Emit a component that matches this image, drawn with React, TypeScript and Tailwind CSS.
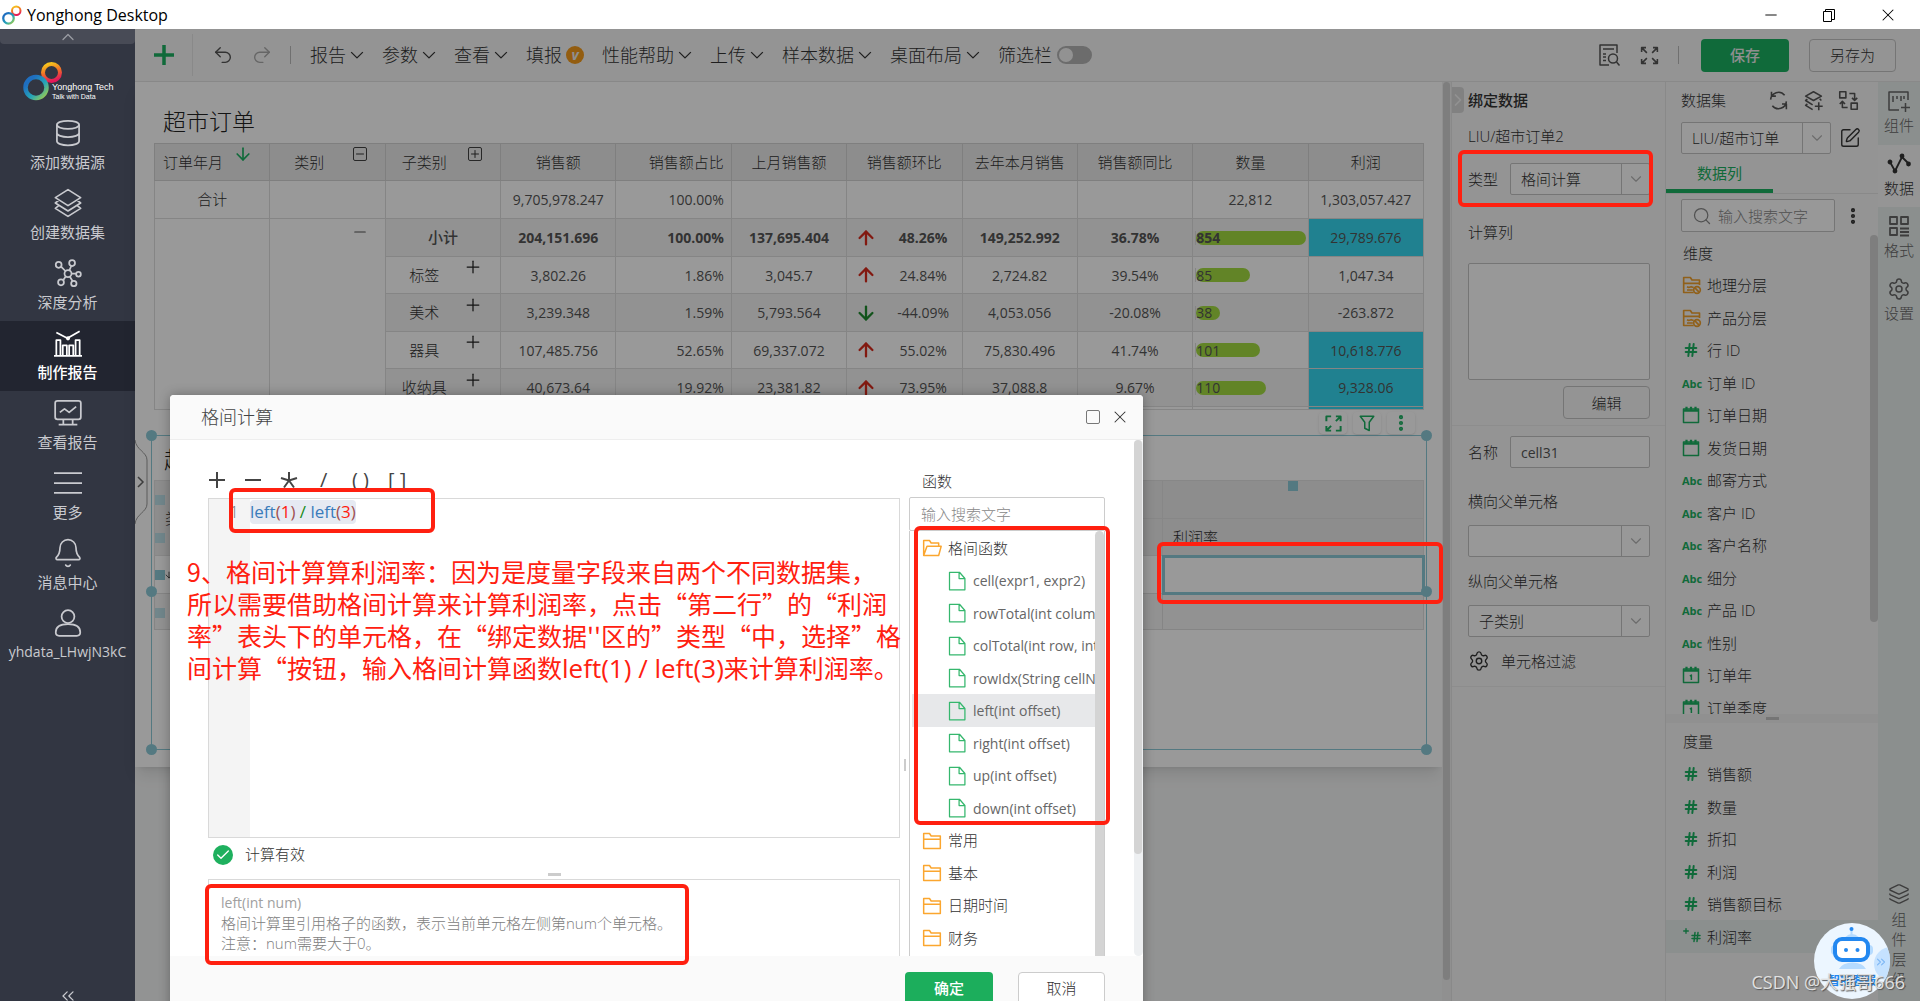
import type { ReactNode } from 'react';
import {
  ArrowDown,
  ArrowUp,
  Bell,
  Check,
  ChevronDown,
  ChevronRight,
  ChevronUp,
  ChevronsLeft,
  ChevronsRight,
  EllipsisVertical,
  Hash,
  Layers,
  Minus,
  Plus,
  Redo2,
  Search,
  Settings,
  SquarePen,
  Undo2,
  X,
} from 'lucide-react';

function RingLogo({ className, id }: { className: string; id: string }) {
  return (
    <svg className={className} viewBox="0 0 40 40" fill="none" aria-hidden="true">
      <defs>
        <linearGradient id={`${id}-blue`} x1="0" y1="0" x2="1" y2="1">
          <stop offset="0.2" stopColor="#1f6fc0" />
          <stop offset="0.6" stopColor="#25a5b8" />
          <stop offset="1" stopColor="#a8cf45" />
        </linearGradient>
        <linearGradient id={`${id}-red`} x1="0.3" y1="0" x2="0.6" y2="1">
          <stop offset="0" stopColor="#f6c21c" />
          <stop offset="0.5" stopColor="#f06a2a" />
          <stop offset="1" stopColor="#e3175b" />
        </linearGradient>
      </defs>
      <circle cx="28.5" cy="11.5" r="8.5" stroke={`url(#${id}-red)`} strokeWidth="4" />
      <circle cx="13" cy="26.5" r="10.5" stroke={`url(#${id}-blue)`} strokeWidth="4.5" />
    </svg>
  );
}

interface LineIconProps {
  className?: string;
  strokeWidth?: number;
  children: ReactNode;
}

function LineIcon({ className = 'size-6', strokeWidth = 1.5, children }: LineIconProps) {
  return (
    <svg
      className={className}
      viewBox="0 0 24 24"
      fill="none"
      stroke="currentColor"
      strokeWidth={strokeWidth}
      strokeLinejoin="round"
      aria-hidden="true"
    >
      {children}
    </svg>
  );
}

function ExpandIcon({ className }: { className: string }) {
  return (
    <LineIcon className={className} strokeWidth={1.8}>
      <path d="M3 8V3h5M3 3l6 6M16 3h5v5M21 3l-6 6M3 16v5h5M3 21l6-6M21 16v5h-5M21 21l-6-6" />
    </LineIcon>
  );
}

function FrameIcon({ className }: { className: string }) {
  return (
    <LineIcon className={className} strokeWidth={2.5}>
      <path d="M3 9V3h6M15 3h6v6M21 3l-6 6M3 15v6h6M3 21l6-6M21 15v6h-6" />
    </LineIcon>
  );
}

const navItems = [
  {
    label: '添加数据源',
    icon: (
      <LineIcon className="size-7">
        <ellipse cx="12" cy="5" rx="9.500" ry="3.500" />
        <path d="M2.500 5v14c0 2 4.200 3.500 9.500 3.500s9.500-1.500 9.500-3.500V5M2.500 12c0 2 4.200 3.500 9.500 3.500s9.500-1.500 9.500-3.500" />
      </LineIcon>
    ),
  },
  {
    label: '创建数据集',
    icon: (
      <LineIcon className="size-8" strokeWidth={1.25}>
        <path d="M12 2l9.500 6-9.500 6-9.500-6zM5 10l-2.500 2 9.500 6 9.500-6-2.500-2M5 14l-2.500 2 9.500 6 9.500-6-2.500-2" />
      </LineIcon>
    ),
  },
  {
    label: '深度分析',
    icon: (
      <LineIcon className="size-7">
        <circle cx="12" cy="12.500" r="3" />
        <circle cx="4" cy="5" r="2.500" />
        <circle cx="15.500" cy="3.500" r="2.500" />
        <circle cx="21" cy="13" r="2" />
        <circle cx="6" cy="20" r="2.500" />
        <circle cx="17" cy="21" r="2.300" />
        <path d="M6 6.500l4 4M14.800 6l-1.600 3.800M15 12.500h4M8 18l2-3M16 19l-2.500-4" />
      </LineIcon>
    ),
  },
  {
    label: '制作报告',
    active: true,
    icon: (
      <LineIcon className="size-7">
        <path d="M0 23h24M2 23V9.500h3.500V23M7.500 23V14H11v9M13 23v-9h3.500v9M18.500 23V9.500H22V23M2 3l9.500 5L22 2" />
        <circle cx="12" cy="8" r="1" />
      </LineIcon>
    ),
  },
  {
    label: '查看报告',
    icon: (
      <LineIcon className="size-7">
        <rect x="1" y="1.500" width="22" height="16" rx="2" />
        <path d="M5 11.500l4-3 4 3 6-5M8 18v3.500M16 18v3.500M4 22h16" />
      </LineIcon>
    ),
  },
  {
    label: '更多',
    icon: (
      <LineIcon className="size-7">
        <path d="M0 3.500h24M0 12h24M0 20.500h24" />
      </LineIcon>
    ),
  },
  { label: '消息中心', icon: <Bell className="size-8" strokeWidth={1.25} /> },
  {
    label: 'yhdata_LHwjN3kC',
    icon: (
      <LineIcon className="size-7">
        <circle cx="12" cy="6.500" r="5.500" />
        <path d="M1.500 20c0-4.500 4-7 10.500-7s10.500 2.500 10.500 7c0 2-1 3-3 3h-15c-2 0-3-1-3-3z" />
      </LineIcon>
    ),
  },
];

function Sidebar() {
  return (
    <nav className="flex w-[135px] shrink-0 flex-col bg-[#323642] text-[#c9cacf]">
      <button type="button" aria-label="收起" className="flex h-[15px] items-center justify-center rounded-b-sm bg-[#484b56]">
        <ChevronUp className="size-5 text-[#9a9ca3]" strokeWidth={1.5} />
      </button>
      <div className="flex h-[67px] items-end pb-[10px] pl-[23px]">
        <RingLogo className="size-10 shrink-0" id="brand" />
        <div className="-ml-[11px] font-['Liberation_Sans',sans-serif] whitespace-nowrap text-white">
          <div className="text-[9px] leading-[11px]">Yonghong Tech</div>
          <div className="text-[7px] leading-2">Talk with Data</div>
        </div>
      </div>
      {navItems.map((item) => (
        <a
          key={item.label}
          href="#"
          className={
            item.active
              ? 'flex h-[70px] flex-col items-center bg-[#222530] pt-1 text-white'
              : 'flex h-[70px] flex-col items-center pt-1'
          }
        >
          <span className="flex h-9 items-center">{item.icon}</span>
          <span
            className={
              item.active
                ? 'text-[15px] leading-[22px] font-medium'
                : item.label.startsWith('yhdata')
                  ? 'text-[14px] leading-[22px]'
                  : 'text-[15px] leading-[22px]'
            }
          >
            {item.label}
          </span>
        </a>
      ))}
      <button type="button" aria-label="折叠菜单" className="mt-auto flex h-2.5 items-center justify-center">
        <ChevronsLeft className="size-5" strokeWidth={1.5} />
      </button>
    </nav>
  );
}

const menus = ['报告', '参数', '查看', '填报', '性能帮助', '上传', '样本数据', '桌面布局'];

function Toolbar() {
  return (
    <header className="flex h-[53px] shrink-0 items-center border-b border-[#e4e4e4] bg-[#f7f7f7] text-[18px] font-light text-[#333]">
      <button type="button" aria-label="新建" className="flex h-[42px] w-[58px] items-center justify-center border-r border-[#e4e4e4]">
        <LineIcon className="size-6 text-[#1cb162]" strokeWidth={3.5}>
          <path d="M12 2v20M2 12h20" />
        </LineIcon>
      </button>
      <button type="button" aria-label="撤销" className="ml-[19px] text-[#555]">
        <Undo2 className="size-[22px]" strokeWidth={1.5} />
      </button>
      <button type="button" aria-label="重做" className="ml-[17px] text-[#aaa]">
        <Redo2 className="size-[22px]" strokeWidth={1.5} />
      </button>
      <span className="mr-[19px] ml-[17px] h-[18px] w-px bg-[#bbb]" />
      <div className="flex items-center gap-[18px]">
        {menus.map((menu) => (
          <button key={menu} type="button" className="flex items-center gap-1 whitespace-nowrap">
            {menu}
            {menu === '填报' ? (
              <span className="flex size-[18px] items-center justify-center rounded-full bg-[#f59b1c] text-[14px] leading-none font-bold text-[#eee] italic">
                v
              </span>
            ) : (
              <LineIcon className="size-[14px]" strokeWidth={2.2}>
                <path d="M2 7l10 10L22 7" />
              </LineIcon>
            )}
          </button>
        ))}
        <label className="flex items-center gap-[5px] whitespace-nowrap">
          筛选栏
          <input
            type="checkbox"
            role="switch"
            className="h-[18px] w-[35px] appearance-none rounded-full border-2 border-[#b4b4b4] bg-[#b4b4b4] before:block before:size-[14px] before:rounded-full before:bg-[#f4f4f4]"
          />
        </label>
      </div>
      <div className="ml-auto flex items-center pr-6">
        <button type="button" aria-label="预览" className="text-[#555]">
          <LineIcon className="size-6">
            <path d="M12 22H3V2h17v8M6 6h11M6 11h3M6 14h3M6 17.500h3" />
            <circle cx="16" cy="15.500" r="4.500" />
            <path d="M19.500 19l3 3.500" />
          </LineIcon>
        </button>
        <button type="button" aria-label="全屏" className="ml-[18px] text-[#555]">
          <ExpandIcon className="size-[21px]" />
        </button>
        <span className="mr-[22px] ml-[18px] h-[18px] w-px bg-[#bbb]" />
        <button type="button" className="h-[33px] w-[88px] rounded-sm bg-[#1cb162] text-[15px] font-medium text-[#eee]">
          保存
        </button>
        <button type="button" className="ml-5 h-[33px] w-[87px] rounded-sm border border-[#c4c4c4] text-[15px]">
          另存为
        </button>
      </div>
    </header>
  );
}

interface SalesRow {
  name: string;
  bold?: boolean;
  sales: string;
  share: string;
  lastMonth: string;
  chain: string;
  down?: boolean;
  lastYear: string;
  yoy: string;
  count: string;
  bar: string;
  profit: string;
  highlight?: boolean;
}

const salesRows: SalesRow[] = [
  { name: '小计', bold: true, sales: '204,151.696', share: '100.00%', lastMonth: '137,695.404', chain: '48.26%', lastYear: '149,252.992', yoy: '36.78%', count: '854', bar: 'w-[110px]', profit: '29,789.676', highlight: true },
  { name: '标签', sales: '3,802.26', share: '1.86%', lastMonth: '3,045.7', chain: '24.84%', lastYear: '2,724.82', yoy: '39.54%', count: '85', bar: 'w-[54px]', profit: '1,047.34' },
  { name: '美术', sales: '3,239.348', share: '1.59%', lastMonth: '5,793.564', chain: '-44.09%', down: true, lastYear: '4,053.056', yoy: '-20.08%', count: '38', bar: 'w-6', profit: '-263.872' },
  { name: '器具', sales: '107,485.756', share: '52.65%', lastMonth: '69,337.072', chain: '55.02%', lastYear: '75,830.496', yoy: '41.74%', count: '101', bar: 'w-16', profit: '10,618.776', highlight: true },
  { name: '收纳具', sales: '40,673.64', share: '19.92%', lastMonth: '23,381.82', chain: '73.95%', lastYear: '37,088.8', yoy: '9.67%', count: '110', bar: 'w-[70px]', profit: '9,328.06', highlight: true },
];

function SquareToggle({ plus = false }: { plus?: boolean }) {
  return (
    <span className="flex size-[14px] -translate-y-2 items-center justify-center rounded-xs border border-[#444]">
      {plus ? <Plus className="size-3" /> : <Minus className="size-3" />}
    </span>
  );
}

function SalesTable() {
  return (
    <table className="w-full table-fixed border-collapse text-center text-[14px] text-[#555] [&_td]:border [&_td]:border-[#dedede] [&_td]:p-0 [&_th]:border [&_th]:border-[#d4d4d4] [&_th]:p-0 [&_th]:text-[15px] [&_th]:font-light [&_th]:text-[#333]">
      <thead>
        <tr className="h-[37px] bg-[#ececec] whitespace-nowrap">
          <th>
            <div className="flex items-center justify-between pr-5 pl-2">
              订单年月
              <ArrowDown className="-mt-4 -mr-1 size-5 text-[#1cb162]" />
            </div>
          </th>
          <th>
            <div className="flex items-center justify-between pr-[18px] pl-6">
              类别
              <SquareToggle />
            </div>
          </th>
          <th>
            <div className="flex items-center justify-between pr-[18px] pl-4">
              子类别
              <SquareToggle plus />
            </div>
          </th>
          <th>销售额</th>
          <th>
            <div className="pr-[7px] text-right">销售额占比</div>
          </th>
          <th>上月销售额</th>
          <th>销售额环比</th>
          <th>去年本月销售</th>
          <th>销售额同比</th>
          <th>数量</th>
          <th>利润</th>
        </tr>
      </thead>
      <tbody>
        <tr className="h-[38px]">
          <td className="text-[15px] font-light text-[#333]">合计</td>
          <td />
          <td />
          <td>9,705,978.247</td>
          <td>
            <div className="pr-[7px] text-right">100.00%</div>
          </td>
          <td />
          <td />
          <td />
          <td />
          <td>22,812</td>
          <td>1,303,057.427</td>
        </tr>
        {salesRows.map((row, index) => (
          <tr
            key={row.name}
            className={
              (index % 2 === 0 ? 'h-[38px] bg-[#f3f3f3]' : 'h-[37px]') + (row.bold ? ' font-bold' : '')
            }
          >
            {index === 0 && (
              <>
                <td rowSpan={6} className="bg-white" />
                <td rowSpan={6} className="bg-white align-top">
                  <Minus className="mt-1 mr-[16px] ml-auto size-[18px]" strokeWidth={1.5} />
                </td>
              </>
            )}
            <td className={row.bold ? 'text-[15px] font-medium' : 'text-[15px] font-light text-[#333]'}>
              {row.bold ? (
                row.name
              ) : (
                <div className="flex items-center">
                  <span className="w-[77px]">{row.name}</span>
                  <Plus className="size-5 -translate-y-2 text-[#222]" strokeWidth={1.5} />
                </div>
              )}
            </td>
            <td>{row.sales}</td>
            <td>
              <div className="pr-[7px] text-right">{row.share}</div>
            </td>
            <td>{row.lastMonth}</td>
            <td>
              <div className="flex items-center pl-2">
                {row.down ? (
                  <ArrowDown className="size-[22px] text-[#1f8a2d]" strokeWidth={2.5} />
                ) : (
                  <ArrowUp className="size-[22px] text-[#d92a1c]" strokeWidth={2.5} />
                )}
                <span className="ml-[15px] w-[62px] text-center">{row.chain}</span>
              </div>
            </td>
            <td>{row.lastYear}</td>
            <td>{row.yoy}</td>
            <td>
              <div className="ml-[2px] flex h-full items-center border-l border-[#dedede]">
                <div className={`${row.bar} flex h-[14px] items-center rounded-full bg-[#a3dd42]`}>{row.count}</div>
              </div>
            </td>
            <td className={row.highlight ? 'bg-[#36d8f0] font-normal' : ''}>{row.profit}</td>
          </tr>
        ))}
        <tr className="h-[3px]">
          <td />
          <td />
          <td />
          <td />
          <td />
          <td />
          <td />
          <td />
          <td className="bg-[#36d8f0]" />
        </tr>
      </tbody>
    </table>
  );
}

const handles = [
  '-top-1.5 -left-1.5',
  '-top-1.5 -right-1.5',
  'top-[150px] -left-1.5',
  'top-[150px] -right-1.5',
  '-bottom-1.5 -left-1.5',
  '-bottom-1.5 -right-1.5',
];

function SelectedComponent() {
  return (
    <section className="relative mt-[26px] mr-[15px] ml-4 h-[315px] border border-[#8ccad8] px-[2px]">
      {handles.map((place) => (
        <span key={place} className={`absolute ${place} size-[11px] rounded-full bg-[#8ccad8]`} />
      ))}
      <div className="absolute -top-6 right-[11px] flex gap-1.5 text-[#1cb162]">
        <button type="button" aria-label="放大" className="flex h-[22px] w-7 items-center justify-center rounded-sm bg-white shadow">
          <FrameIcon className="size-[19px]" />
        </button>
        <button type="button" aria-label="筛选" className="flex h-[22px] w-7 items-center justify-center rounded-sm bg-white shadow">
          <LineIcon className="size-[18px]" strokeWidth={2}>
            <path d="M3 3h18l-6 8v11l-6-3v-8z" />
          </LineIcon>
        </button>
        <button type="button" aria-label="更多操作" className="flex h-[22px] w-7 items-center justify-center rounded-sm bg-white shadow">
          <EllipsisVertical className="size-5" strokeWidth={3} />
        </button>
      </div>
      <h2 className="h-[44px] pt-2 pl-[10px] text-[23px] leading-[30px] font-light text-[#222]">超市订单</h2>
      <table className="w-full table-fixed border-collapse text-left text-[15px] text-[#333] [&_td]:border [&_td]:border-[#dedede] [&_td]:p-0 [&_th]:border [&_th]:border-[#e2e2e2] [&_th]:p-0 [&_th]:font-light">
        <tbody>
          <tr className="h-[38px] bg-[#ececec]">
            <th rowSpan={2} className="relative">
              <span className="absolute top-[14px] left-0 size-2.5 bg-[#bcdfe8]" />
              <span className="absolute top-[52px] left-0 size-2.5 bg-[#bcdfe8]" />
              <div className="pl-[10px]">类别</div>
            </th>
            <th />
            <th />
            <th />
            <th className="relative w-[261px]">
              <span className="absolute top-0 left-[125px] size-2.5 bg-[#8ccad8]" />
            </th>
          </tr>
          <tr className="h-[37px] bg-[#ececec]">
            <th />
            <th />
            <th />
            <th>
              <div className="pl-[10px]">利润率</div>
            </th>
          </tr>
          <tr className="h-[38px]">
            <td className="relative">
              <span className="absolute top-[14px] left-0 size-2.5 bg-[#8ccad8]" />
              <ArrowDown className="ml-[9px] size-[10px]" />
            </td>
            <td />
            <td />
            <td />
            <td className="relative outline-3 -outline-offset-2 outline-[#8ccad8]">
              <span className="absolute -top-[14px] -right-[20px] -bottom-[11px] -left-[6px] z-20 rounded-md border-4 border-[#ff2010]" />
            </td>
          </tr>
          <tr className="h-[36px] bg-[#f3f3f3]">
            <td className="relative">
              <span className="absolute top-[14px] left-0 size-2.5 bg-[#bcdfe8]" />
            </td>
            <td />
            <td />
            <td />
            <td />
          </tr>
        </tbody>
      </table>
    </section>
  );
}

function Canvas() {
  return (
    <main className="relative flex min-w-0 flex-1 bg-[#f4f5f5]">
      <div className="min-w-0 flex-1">
        <div className="h-[685px] bg-white shadow-lg">
          <h1 className="h-[61px] pt-[25px] pl-[28px] text-[23px] leading-7 font-light text-[#222]">超市订单</h1>
          <div className="h-[266px] pr-[18px] pl-[19px]">
            <SalesTable />
          </div>
          <SelectedComponent />
        </div>
      </div>
      <svg className="absolute top-[358px] left-0 h-[84px] w-[14px] text-[#999]" viewBox="0 0 14 84" fill="none" stroke="currentColor" aria-hidden="true">
        <path d="M0 0c1 10 12 12 12 20v44c0 8-11 10-12 20" />
        <path d="M3 37l5 5-5 5" stroke="#666" strokeWidth="1.500" />
      </svg>
      <div className="w-[9px] bg-[#f0f0f0] pb-[21px] pl-px">
        <div className="h-full w-[7px] rounded-full bg-[#d2d2d2]" />
      </div>
    </main>
  );
}

interface SelectBoxProps {
  label: string;
  value?: string;
  className: string;
}

function SelectBox({ label, value = '', className }: SelectBoxProps) {
  return (
    <div className={`${className} relative flex h-8 shrink-0 rounded-xs border border-[#c4c4c4] bg-[#fdfdfd]`}>
      <select aria-label={label} defaultValue={value} className="w-full appearance-none bg-transparent pl-[10px] text-[15px]">
        <option>{value}</option>
      </select>
      <span className="pointer-events-none absolute top-0 right-0 flex h-full w-7 items-center justify-center border-l border-[#c4c4c4]">
        <ChevronDown className="size-[18px] text-[#b4b4b4]" strokeWidth={1.5} />
      </span>
    </div>
  );
}

function BindingPanel() {
  return (
    <aside className="relative w-[214px] shrink-0 border-l border-[#e4e4e4] bg-[#f7f7f7] text-[15px] leading-5 font-light text-[#333]">
      <button type="button" aria-label="收起面板" className="absolute top-[5px] left-0 flex h-[26px] w-3 items-center justify-center rounded-r-sm bg-[#d8d8d8]">
        <ChevronRight className="size-5 shrink-0 text-[#f4f4f4]" />
      </button>
      <div className="border-b border-[#ececec] pt-2 pr-[15px] pb-[6px] pl-4">
        <h3 className="font-medium">绑定数据</h3>
        <p className="mt-4">LIU/超市订单2</p>
        <div className="relative mt-[17px] flex items-center justify-between">
          类型
          <SelectBox label="类型" value="格间计算" className="w-[140px]" />
          <span className="pointer-events-none absolute -top-[13px] -right-[3px] -bottom-3 -left-[10px] z-20 rounded-md border-4 border-[#ff2010]" />
        </div>
        <label htmlFor="calc" className="mt-[27px] block">
          计算列
        </label>
        <textarea id="calc" className="mt-[21px] block h-[117px] w-full resize-none rounded-xs border border-[#c4c4c4] bg-[#fdfdfd]" />
        <button type="button" className="mt-[6px] ml-auto block h-[33px] w-[87px] rounded-sm border border-[#c4c4c4]">
          编辑
        </button>
      </div>
      <div className="border-b border-[#ececec] pt-[10px] pr-[15px] pb-[14px] pl-4">
        <label className="flex items-center justify-between">
          名称
          <input defaultValue="cell31" className="h-8 w-[140px] rounded-xs border border-[#c4c4c4] bg-[#fdfdfd] px-[10px] text-[14px] font-normal text-[#555]" />
        </label>
        <p className="mt-[23px]">横向父单元格</p>
        <SelectBox label="横向父单元格" className="mt-[14px] w-full" />
        <p className="mt-[14px]">纵向父单元格</p>
        <SelectBox label="纵向父单元格" value="子类别" className="mt-[14px] w-full" />
        <button type="button" className="mt-[13px] flex items-center gap-[11px]">
          <Settings className="size-[22px]" strokeWidth={1.5} />
          单元格过滤
        </button>
      </div>
    </aside>
  );
}

type FieldType = 'folder' | 'number' | 'text' | 'date' | 'dateNumber' | 'calc';

function FieldIcon({ type }: { type: FieldType }) {
  if (type === 'number') return <Hash className="ml-px size-4 text-[#1cb162]" strokeWidth={3} />;
  if (type === 'text') return <span className="text-[11px] font-bold text-[#1cb162]">Abc</span>;
  if (type === 'calc') {
    return (
      <span className="flex text-[#1cb162]">
        <Plus className="size-2 -translate-y-1" strokeWidth={4} />
        <Hash className="size-3" strokeWidth={3} />
      </span>
    );
  }
  if (type === 'folder') {
    return (
      <LineIcon className="size-5 text-[#f0a02c]" strokeWidth={2}>
        <path d="M21 12V6H12l-2-3H2v18h12M2 10h19M6 14l2 1 3-1 3 1M6 18h7" />
        <circle cx="18" cy="18" r="4" />
        <path d="M15.500 15.500l5 5" />
      </LineIcon>
    );
  }
  return (
    <LineIcon className="size-[18px] text-[#1cb162]" strokeWidth={2}>
      <path d="M2 4h20v18H2z" />
      <path d="M2 6h20M6 1v4M12 1v4M18 1v4" strokeWidth={3} />
      {type === 'dateNumber' && <path d="M10.500 13.500L12.500 12v6.500" />}
    </LineIcon>
  );
}

const dimensions: { label: string; type: FieldType }[] = [
  { label: '地理分层', type: 'folder' },
  { label: '产品分层', type: 'folder' },
  { label: '行 ID', type: 'number' },
  { label: '订单 ID', type: 'text' },
  { label: '订单日期', type: 'date' },
  { label: '发货日期', type: 'date' },
  { label: '邮寄方式', type: 'text' },
  { label: '客户 ID', type: 'text' },
  { label: '客户名称', type: 'text' },
  { label: '细分', type: 'text' },
  { label: '产品 ID', type: 'text' },
  { label: '性别', type: 'text' },
  { label: '订单年', type: 'dateNumber' },
  { label: '订单季度', type: 'dateNumber' },
];

const measures: { label: string; type: FieldType }[] = [
  { label: '销售额', type: 'number' },
  { label: '数量', type: 'number' },
  { label: '折扣', type: 'number' },
  { label: '利润', type: 'number' },
  { label: '销售额目标', type: 'number' },
  { label: '利润率', type: 'calc' },
];

function FieldList({ fields }: { fields: { label: string; type: FieldType }[] }) {
  return (
    <ul>
      {fields.map((field) => (
        <li
          key={field.label}
          className={
            field.type === 'calc'
              ? 'flex items-center bg-[#e8eeed] pl-4 odd:h-8 even:h-[33px]'
              : 'flex items-center pl-4 odd:h-8 even:h-[33px]'
          }
        >
          <span className="w-[25px]">
            <FieldIcon type={field.type} />
          </span>
          {field.label}
        </li>
      ))}
    </ul>
  );
}

function DatasetPanel() {
  return (
    <aside className="flex w-[213px] shrink-0 flex-col border-l border-[#e4e4e4] bg-[#f7f7f7] text-[15px] leading-5 font-light text-[#333]">
      <div className="flex h-9 shrink-0 items-center pr-[19px] pl-[15px]">
        <h3 className="mr-auto">数据集</h3>
        <div className="flex gap-[14px] text-[#555]">
          <button type="button" aria-label="刷新">
            <LineIcon className="size-[21px]" strokeWidth={1.8}>
              <path d="M3 11a9 9 0 0 1 16-5M21 13a9 9 0 0 1-16 5M4 2v5h5M21 22v-6h-5" />
            </LineIcon>
          </button>
          <button type="button" aria-label="添加数据集">
            <LineIcon className="size-[21px]" strokeWidth={1.8}>
              <path d="M12 2l9 5-9 5-9-5zM5 10.500l-2 1.500 8 5M5 16l-2 1.500 8 5M19 10l2 2M18 14v9M13.500 18.500h9" />
            </LineIcon>
          </button>
          <button type="button" aria-label="替换">
            <LineIcon className="size-[21px]" strokeWidth={1.8}>
              <rect x="2" y="2" width="7" height="7" />
              <rect x="15" y="15" width="7" height="7" />
              <path d="M13 4h6v8M16 9l3 3 3-3M5 13v7h6M2 16l3-3 3 3" />
            </LineIcon>
          </button>
        </div>
      </div>
      <div className="flex shrink-0 items-center gap-2 pt-1 pl-[15px]">
        <SelectBox label="数据集" value="LIU/超市订单" className="w-[150px]" />
        <button type="button" aria-label="编辑数据集">
          <SquarePen className="size-[22px]" strokeWidth={1.5} />
        </button>
      </div>
      <div className="h-10 shrink-0 border-b border-[#e4e4e4]">
        <button type="button" className="h-full w-[107px] border-b-4 border-[#1cb162] pt-0.5 font-normal text-[#1cb162]">
          数据列
        </button>
      </div>
      <div className="flex shrink-0 items-center pt-[5px] pl-[15px]">
        <label className="flex h-[33px] w-[154px] items-center rounded-xs border border-[#c4c4c4] bg-[#fdfdfd] pl-[10px]">
          <Search className="size-[20px] shrink-0 text-[#888]" strokeWidth={1.5} />
          <input aria-label="搜索字段" placeholder="输入搜索文字" className="ml-1.5 w-full min-w-0 bg-transparent placeholder:text-[#888]" />
        </label>
        <EllipsisVertical className="ml-2 size-5" strokeWidth={3} />
      </div>
      <div className="flex min-h-0 flex-1 justify-between overflow-hidden pt-[3px]">
        <div className="min-w-0">
          <h4 className="h-[34px] pt-2 pl-[17px]">维度</h4>
          <FieldList fields={dimensions} />
        </div>
        <div className="h-[387px] w-2 shrink-0 rounded-full bg-[#d2d2d2]" />
      </div>
      <div className="flex h-[9px] shrink-0 items-center justify-center bg-[#f0f0f0]">
        <span className="h-[3px] w-[13px] bg-[#c4c4c4]" />
      </div>
      <div className="h-[278px] shrink-0">
        <h4 className="h-[35px] pt-2 pl-[17px]">度量</h4>
        <FieldList fields={measures} />
      </div>
    </aside>
  );
}

const sideTabs = [
  {
    label: '组件',
    icon: (
      <LineIcon>
        <path d="M21 11V3H2v18h10M6 7v6M10 7v3M14 7v5M17 7v3M18.500 14v9M14 18.500h9" />
      </LineIcon>
    ),
  },
  {
    label: '数据',
    active: true,
    icon: (
      <LineIcon strokeWidth={1.8}>
        <path d="M3 10l5 9 7-14 7 7" />
        <circle cx="3" cy="10" r="1.500" fill="currentColor" />
        <circle cx="8" cy="19" r="1.500" fill="currentColor" />
        <circle cx="15" cy="4" r="1.500" fill="currentColor" />
        <circle cx="21.500" cy="12" r="1.500" fill="currentColor" />
      </LineIcon>
    ),
  },
  {
    label: '格式',
    icon: (
      <LineIcon strokeWidth={1.8}>
        <path d="M3 3h7v7H3zM14 3h7v7h-7zM3 14h7v7H3zM13 14.500h9M13 18h9M13 21.500h9" />
      </LineIcon>
    ),
  },
  { label: '设置', icon: <Settings className="size-6" strokeWidth={1.5} /> },
];

function SideTabs() {
  return (
    <div className="flex w-[42px] shrink-0 flex-col bg-[#e8eeed] text-[15px] leading-5 font-light text-[#666]">
      {sideTabs.map((tab) => (
        <button
          key={tab.label}
          type="button"
          className={
            tab.active
              ? 'flex h-[62px] flex-col items-center gap-0.5 bg-[#f9f9f9] pt-[7px] text-[#333]'
              : 'flex h-[63px] flex-col items-center gap-0.5 pt-[7px]'
          }
        >
          {tab.icon}
          {tab.label}
        </button>
      ))}
      <button type="button" className="mt-auto mb-3 flex flex-col items-center gap-1">
        <Layers className="size-[22px]" strokeWidth={1.5} />
        <span className="w-4 break-all">组件层级</span>
      </button>
    </div>
  );
}

const functions = [
  'cell(expr1, expr2)',
  'rowTotal(int column)',
  'colTotal(int row, int col)',
  'rowIdx(String cellName)',
  'left(int offset)',
  'right(int offset)',
  'up(int offset)',
  'down(int offset)',
];

const folders = ['常用', '基本', '日期时间', '财务'];

function FolderIcon({ open = false }: { open?: boolean }) {
  return (
    <LineIcon className="size-5 shrink-0 text-[#fba62f]" strokeWidth={1.8}>
      {open ? <path d="M2 21V3h7l2 3h9v4M2 21L6 10h17l-3 11z" /> : <path d="M2 21V3h7l2 3h11v15zM2 10h20" />}
    </LineIcon>
  );
}

function FunctionTree() {
  return (
    <div className="relative flex min-h-0 flex-1 border-x border-[#ccc]">
      <ul className="min-w-0 flex-1 overflow-hidden pt-px pl-[2px]">
        <li className="flex items-center gap-[6px] pl-[10px] odd:h-8 even:h-[33px]">
          <FolderIcon open />
          格间函数
        </li>
        {functions.map((name) => (
          <li
            key={name}
            className={
              name.startsWith('left')
                ? 'flex items-center gap-1.5 bg-[#e7e8ea] pl-[35px] whitespace-nowrap odd:h-8 even:h-[33px]'
                : 'flex items-center gap-1.5 pl-[35px] whitespace-nowrap odd:h-8 even:h-[33px]'
            }
          >
            <LineIcon className="size-5 shrink-0 text-[#35b76d]">
              <path d="M3 1.500h12L21.500 9v13.500H3zM14.500 1.500V9h7" />
            </LineIcon>
            <span className="text-[14px] font-normal text-[#666]">{name}</span>
          </li>
        ))}
        {folders.map((name) => (
          <li key={name} className="flex items-center gap-[6px] pl-[10px] odd:h-8 even:h-[33px]">
            <FolderIcon />
            {name}
          </li>
        ))}
      </ul>
      <div className="w-[9px] rounded-t-full bg-[#d4d4d4]" />
      <span className="pointer-events-none absolute -top-[5px] -right-[6px] left-1 h-[299px] rounded-md border-4 border-[#ff2010]" />
    </div>
  );
}

const operators = [
  { name: '加', path: 'M4 12h16M12 4v16' },
  { name: '减', path: 'M4 12h16' },
  { name: '乘', path: 'M12 4v8.500M12 12.500L4 10M12 12.500L20 10M12 12.500l-5 7M12 12.500l5 7' },
];

const brackets = ['/', '( )', '[ ]'];

function FormulaDialog() {
  return (
    <div
      role="dialog"
      aria-label="格间计算"
      className="absolute top-[366px] left-[35px] z-30 w-[973px] rounded-t-sm bg-white text-[15px] font-light text-[#333] shadow-[0_0_12px_rgba(0,0,0,0.3)]"
    >
      <div className="flex h-[45px] items-center rounded-t-sm border-b border-[#eee] bg-[#fafafa] pr-[13px] pl-[31px]">
        <h2 className="mr-auto text-[18px] text-[#444]">格间计算</h2>
        <button type="button" aria-label="最大化" className="mr-[10px] size-[14px] rounded-xs border border-[#777]" />
        <button type="button" aria-label="关闭">
          <X className="size-5" strokeWidth={1.25} />
        </button>
      </div>
      <div className="flex h-[516px] pl-[38px]">
        <div className="flex w-[692px] flex-col pt-[21px]">
          <div className="flex h-[37px] items-center text-[20px] leading-none font-normal text-[#444]">
            {operators.map((op) => (
              <button key={op.name} type="button" aria-label={op.name} className="w-9">
                <LineIcon className="-ml-[3px] size-6" strokeWidth={2}>
                  <path d={op.path} />
                </LineIcon>
              </button>
            ))}
            {brackets.map((op) => (
              <button
                key={op}
                type="button"
                className={op === '/' ? 'w-9 pl-1 text-left' : 'w-9 text-left whitespace-nowrap'}
              >
                {op}
              </button>
            ))}
          </div>
          <div className="relative flex h-[340px] border border-[#d9d9d9]">
            <div className="w-[41px] bg-[#f4f4f4] pt-px pr-[11px] text-right text-[17px] leading-6 text-[#777]">1</div>
            <code className="mt-px h-6 rounded-sm bg-[#e6eaf2] font-['Open_Sans',sans-serif] text-[17px] leading-6 font-normal whitespace-nowrap text-[#3a7cbb]">
              left<span className="text-[#a05050]">(</span>
              <span className="text-[#ff1a10]">1</span>
              <span className="text-[#a05050]">)</span> <span className="text-[#178a17]">/</span> left
              <span className="text-[#a05050]">(</span>
              <span className="text-[#ff1a10]">3</span>
              <span className="text-[#a05050]">)</span>
            </code>
            <span className="pointer-events-none absolute -top-[11px] left-[20px] h-[45px] w-[206px] rounded-md border-4 border-[#ff2010]" />
          </div>
          <div className="flex h-[33px] items-center gap-3 pl-[5px]">
            <span className="flex size-5 items-center justify-center rounded-full bg-[#1eb05e] text-white">
              <Check className="size-4" strokeWidth={2} />
            </span>
            计算有效
          </div>
          <span className="mx-auto mt-0.5 h-[3px] w-[13px] bg-[#ccc]" />
          <div className="relative mt-[3px] flex-1 border border-b-0 border-[#d9d9d9] pt-[13px] pl-3 leading-5 text-[#808080]">
            <p className="text-[14px] leading-5 font-normal text-[#a0a0a0]">left(int num)</p>
            <p>格间计算里引用格子的函数，表示当前单元格左侧第num个单元格。</p>
            <p>注意：num需要大于0。</p>
            <span className="pointer-events-none absolute top-1 -left-[4px] h-[81px] w-[484px] rounded-md border-4 border-[#ff2010]" />
          </div>
        </div>
        <div className="flex w-[9px] items-center justify-center pt-[134px]">
          <span className="h-3 w-[2px] bg-[#ccc]" />
        </div>
        <div className="flex w-[196px] flex-col">
          <label htmlFor="fn-search" className="h-[57px] pt-[30px] pl-[13px]">
            函数
          </label>
          <input id="fn-search" placeholder="输入搜索文字" className="h-[34px] shrink-0 rounded-xs border border-[#ccc] pl-[11px] placeholder:text-[#888]" />
          <FunctionTree />
        </div>
        <div className="ml-auto w-[9px] rounded-full bg-[#eef0f2]">
          <div className="h-[414px] w-2 rounded-full bg-[#d4d4d4]" />
        </div>
      </div>
      <div className="flex h-[60px] justify-end gap-[25px] bg-[#fafafa] pt-4 pr-[38px]">
        <button type="button" className="h-[33px] w-[88px] rounded-sm bg-[#1cae5c] font-medium text-white">
          确定
        </button>
        <button type="button" className="h-[33px] w-[87px] rounded-sm border border-[#ccc] bg-white">
          取消
        </button>
      </div>
      <p className="absolute top-[160px] left-[17px] font-['Noto_Sans_CJK_SC',sans-serif] text-[25px] leading-8 font-normal whitespace-nowrap text-[#ff2010]">
        9、格间计算算利润率：因为是度量字段来自两个不同数据集，
        <br />
        所以需要借助格间计算来计算利润率，点击“第二行”的“利润
        <br />
        率”表头下的单元格，在“绑定数据''区的”类型“中，选择”格
        <br />
        间计算“按钮，输入格间计算函数<span className="font-['Open_Sans',sans-serif] text-[26px]">left(1) / left(3)</span>来计算利润率。
      </p>
    </div>
  );
}

function ServiceRobot() {
  return (
    <button type="button" aria-label="智能客服" className="absolute right-[30px] bottom-[2px] z-30 size-[76px] overflow-hidden rounded-full bg-[#ecf6ff]">
      <svg className="absolute inset-0 size-full" viewBox="0 0 76 76" fill="none" aria-hidden="true">
        <path d="M29 20a9 9 0 0 1 18 0M25 46a14 9 0 0 1 27 0z" fill="#b5dbff" />
        <path d="M37.500 6v8" stroke="#b5dbff" strokeWidth="2" />
        <circle cx="37.500" cy="6" r="2" fill="#2388f0" />
        <rect x="17" y="22" width="42" height="10" rx="4" fill="#b5dbff" />
        <rect x="21" y="16" width="33" height="21" rx="7" fill="#fff" stroke="#2388f0" strokeWidth="4" />
        <circle cx="32" cy="27" r="2" fill="#2388f0" />
        <circle cx="43.500" cy="27" r="2" fill="#2388f0" />
        <circle cx="77" cy="41" r="17" fill="#c5e2ff" />
      </svg>
      <ChevronsRight className="absolute top-8 right-0.5 size-[14px] text-[#7fb8f5]" />
      <span className="absolute inset-x-0 bottom-2.5 text-[12px] leading-4 font-bold text-[#2388f0]">智能客服</span>
    </button>
  );
}

export default function App() {
  return (
    <div className="flex h-screen flex-col overflow-hidden bg-white font-['Open_Sans','Noto_Sans_CJK_SC',sans-serif]">
      <div className="flex h-[29px] shrink-0 items-center bg-white pl-0.5 text-black">
        <RingLogo className="size-5" id="window" />
        <span className="ml-[5px] text-[16px]">Yonghong Desktop</span>
        <div className="ml-auto flex items-center gap-[41px] pr-[22px]">
          <button type="button" aria-label="最小化">
            <Minus className="size-[18px]" strokeWidth={1.25} />
          </button>
          <button type="button" aria-label="还原">
            <svg className="size-4" viewBox="0 0 16 16" fill="none" stroke="currentColor" aria-hidden="true">
              <path d="M2.500 4.500h8v10h-8zM4.500 4.500v-2h9v10h-3" />
            </svg>
          </button>
          <button type="button" aria-label="关闭窗口">
            <X className="size-5" strokeWidth={1.25} />
          </button>
        </div>
      </div>
      <div className="flex min-h-0 flex-1">
        <Sidebar />
        <div className="relative flex min-w-0 flex-1 flex-col">
          <Toolbar />
          <div className="flex min-h-0 flex-1">
            <Canvas />
            <BindingPanel />
            <DatasetPanel />
            <SideTabs />
          </div>
          <div className="pointer-events-none absolute inset-0 z-10 bg-black/40" />
          <FormulaDialog />
          <ServiceRobot />
          <span className="absolute right-[15px] bottom-[7px] z-30 text-[18px] leading-6 text-[#e0e0e0] [text-shadow:1px_1px_1px_#555]">
            CSDN @大强哥666
          </span>
        </div>
      </div>
    </div>
  );
}
